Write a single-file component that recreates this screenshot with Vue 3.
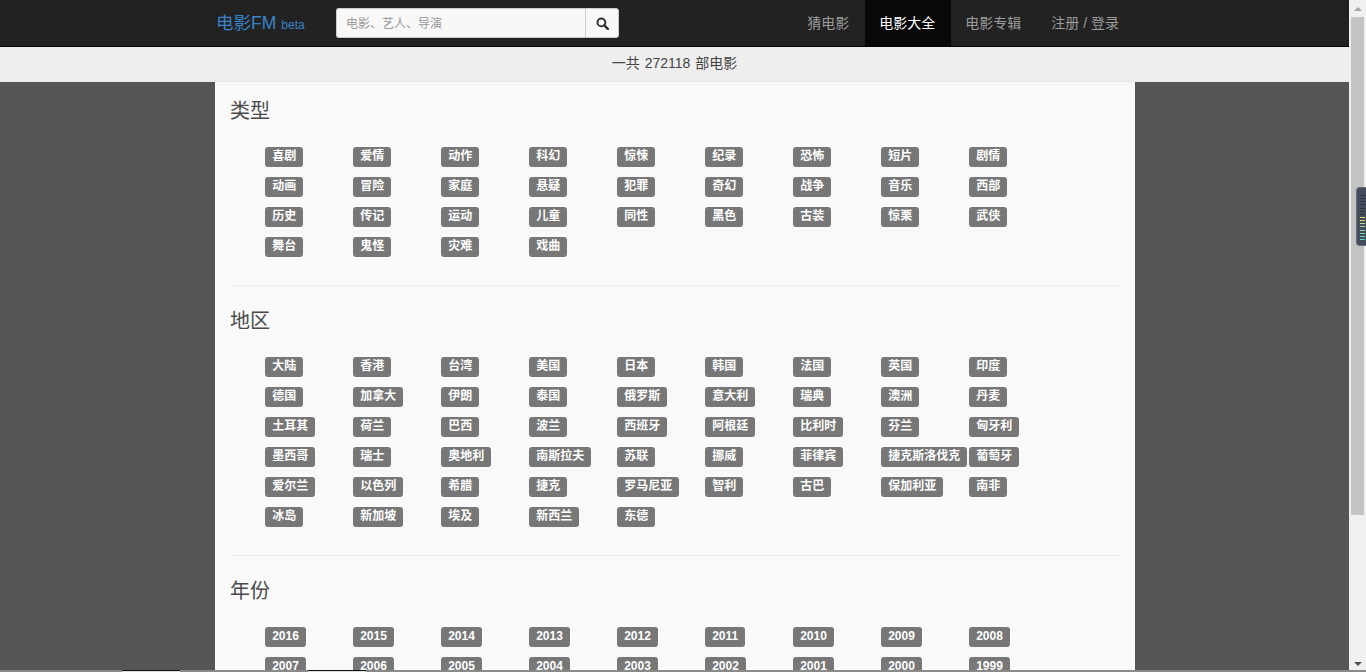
<script setup>
const sections = [
  {
    title: '类型',
    items: ['喜剧','爱情','动作','科幻','惊悚','纪录','恐怖','短片','剧情','动画','冒险','家庭','悬疑','犯罪','奇幻','战争','音乐','西部','历史','传记','运动','儿童','同性','黑色','古装','惊栗','武侠','舞台','鬼怪','灾难','戏曲'],
  },
  {
    title: '地区',
    items: ['大陆','香港','台湾','美国','日本','韩国','法国','英国','印度','德国','加拿大','伊朗','泰国','俄罗斯','意大利','瑞典','澳洲','丹麦','土耳其','荷兰','巴西','波兰','西班牙','阿根廷','比利时','芬兰','匈牙利','墨西哥','瑞士','奥地利','南斯拉夫','苏联','挪威','菲律宾','捷克斯洛伐克','葡萄牙','爱尔兰','以色列','希腊','捷克','罗马尼亚','智利','古巴','保加利亚','南非','冰岛','新加坡','埃及','新西兰','东德'],
  },
  {
    title: '年份',
    items: ['2016','2015','2014','2013','2012','2011','2010','2009','2008','2007','2006','2005','2004','2003','2002','2001','2000','1999'],
  },
]
const navs = [
  { text: '猜电影' },
  { text: '电影大全', active: true },
  { text: '电影专辑' },
  { text: '注册 / 登录' },
]
const meterBars = ['#2f333b','#2f333b','#2f333b','#2f333b','#2f333b','#2f333b','#2f333b','#d8d86a','#d8d86a','#b4dc80','#96dc90','#80dca4','#6cdcb0','#60dcbc','#58dcc4']
</script>

<template>
  <div class="screen">
    <div class="page">
      <nav class="navbar">
        <div class="nav-inner">
          <a class="brand">电影FM<small>beta</small></a>
          <form class="search" @submit.prevent>
            <input class="search-input" type="text" placeholder="电影、艺人、导演" />
            <button class="search-btn" type="button" aria-label="搜索">
              <svg width="13" height="13" viewBox="0 0 13 13">
                <circle cx="5.4" cy="5.4" r="3.9" fill="none" stroke="#333" stroke-width="2" />
                <path d="M8.3 8.3 L11.8 11.8" stroke="#333" stroke-width="2.4" stroke-linecap="round" />
              </svg>
            </button>
          </form>
          <ul class="nav-links">
            <li v-for="n in navs" :key="n.text" :class="{ active: n.active }">{{ n.text }}</li>
          </ul>
        </div>
      </nav>
      <div class="subbar">一共 272118 部电影</div>
      <main class="container">
        <section v-for="(s, i) in sections" :key="s.title" class="section">
          <hr v-if="i > 0" class="divider" />
          <h3 class="heading">{{ s.title }}</h3>
          <ul class="tags">
            <li v-for="t in s.items" :key="t"><span class="label">{{ t }}</span></li>
          </ul>
        </section>
      </main>
    </div>
    <aside class="scrollbar">
      <div class="arrow-box"><span class="arrow up"></span></div>
      <div class="track"><div class="thumb"></div></div>
      <div class="arrow-box"><span class="arrow down"></span></div>
    </aside>
    <div class="meter">
      <span v-for="(c, i) in meterBars" :key="i" class="meter-bar" :style="{ background: c }"></span>
    </div>
    <div class="bottom-strip">
      <span class="seg gray w122"></span>
      <span class="seg dark w58"></span>
      <span class="seg gray w128"></span>
      <span class="seg dark w58"></span>
      <span class="seg gray grow"></span>
    </div>
  </div>
</template>

<style>
html, body { margin: 0; height: 100%; overflow: hidden; background: #555; }
</style>

<style scoped>
.screen {
  position: relative;
  display: flex;
  width: 1366px;
  height: 672px;
  overflow: hidden;
  font-family: "Liberation Sans", "Noto Sans CJK SC", sans-serif;
  font-size: 14px;
  color: #333;
}
.page {
  width: 1349px;
  height: 672px;
  overflow: hidden;
  background: #555;
  flex: none;
}
.navbar {
  height: 46px;
  background: #222;
  border-bottom: 1px solid #080808;
}
.nav-inner {
  display: flex;
  align-items: flex-start;
  width: 920px;
  margin-left: 215px;
  height: 46px;
}
.brand {
  width: 121px;
  padding-left: 1px;
  box-sizing: border-box;
  line-height: 46px;
  font-size: 17.5px;
  color: #3b82c9;
  white-space: nowrap;
  flex: none;
}
.brand small {
  margin-left: 5px;
  font-size: 12px;
}
.search {
  display: flex;
  margin-top: 8px;
  height: 30px;
  flex: none;
}
.search-input {
  width: 249px;
  height: 30px;
  box-sizing: border-box;
  padding: 2px 9px 0;
  border: 1px solid #ccc;
  border-right: 0;
  border-radius: 3px 0 0 3px;
  background: #f8f8f8;
  font: 12px "Liberation Sans", "Noto Sans CJK SC", sans-serif;
  outline: none;
}
.search-input::placeholder { color: #999; opacity: 1; }
.search-btn {
  display: flex;
  align-items: center;
  justify-content: center;
  width: 34px;
  height: 30px;
  padding: 0;
  border: 1px solid #ccc;
  border-radius: 0 3px 3px 0;
  background: #f8f8f8;
}
.nav-links {
  display: flex;
  margin: 0 0 0 auto;
  padding: 0;
  list-style: none;
  height: 46px;
}
.nav-links li {
  padding: 0 16px 0 14px;
  line-height: 46px;
  color: #9d9d9d;
  white-space: nowrap;
}
.nav-links li.active {
  color: #fff;
  background: #080808;
}
.subbar {
  height: 34px;
  line-height: 32px;
  background: #eee;
  border-bottom: 1px solid #e7e7e7;
  text-align: center;
  color: #444;
  word-spacing: 1px;
}
.container {
  width: 920px;
  margin-left: 215px;
  box-sizing: border-box;
  padding: 0 15px;
  background: #f9f9f9;
  height: 590px;
  overflow: hidden;
}
.heading {
  box-sizing: border-box;
  height: 56px;
  margin: 0;
  padding-top: 22px;
  font-size: 20px;
  font-weight: 400;
  line-height: 26px;
  color: #4a4a4a;
}
.section:first-child .heading {
  height: 50px;
  padding-top: 16px;
}
.tags {
  display: grid;
  grid-template-columns: repeat(9, 88px);
  grid-auto-rows: 30px;
  margin: 15px 0 0;
  padding: 0 0 18px 35px;
  list-style: none;
}
.tags li { white-space: nowrap; }
.label {
  display: inline-block;
  height: 20px;
  line-height: 19px;
  padding: 0 7.2px;
  box-sizing: border-box;
  border-radius: 3px;
  background: #777;
  color: #fff;
  font-size: 12px;
  font-weight: 700;
}
.divider {
  margin: 0;
  border: 0;
  border-top: 1px solid #eee;
}
.scrollbar {
  width: 17px;
  flex: none;
  display: flex;
  flex-direction: column;
  background: #f0f0f0;
}
.arrow-box {
  height: 17px;
  display: flex;
  align-items: center;
  justify-content: center;
  flex: none;
  padding-left: 1px;
}
.arrow {
  width: 0;
  height: 0;
  border-left: 4px solid transparent;
  border-right: 4px solid transparent;
}
.arrow.up { border-bottom: 4px solid #a3a3a3; }
.arrow.down { border-top: 4px solid #505050; }
.track { flex: 1; padding: 0 2px; }
.thumb { height: 498px; background: #c4c4c4; }
.meter {
  position: absolute;
  left: 1356px;
  top: 187px;
  width: 10px;
  height: 59px;
  box-sizing: border-box;
  background: #454c5c;
  border: 1px solid #666c7a;
  border-right: 0;
  border-radius: 4px 0 0 4px;
  padding: 7px 0 5px 3px;
  display: flex;
  flex-direction: column;
  justify-content: space-between;
}
.meter-bar { display: block; height: 1px; width: 5px; }
.bottom-strip {
  position: absolute;
  left: 0;
  bottom: 0;
  width: 100%;
  height: 2px;
  display: flex;
}
.seg { display: block; height: 100%; box-sizing: border-box; }
.gray { background: #8a8a8a; }
.dark { background: #ddd; border-top: 1px solid #111; }
.w122 { width: 122px; }
.w58 { width: 58px; }
.w128 { width: 128px; }
.grow { flex: 1; }
</style>
